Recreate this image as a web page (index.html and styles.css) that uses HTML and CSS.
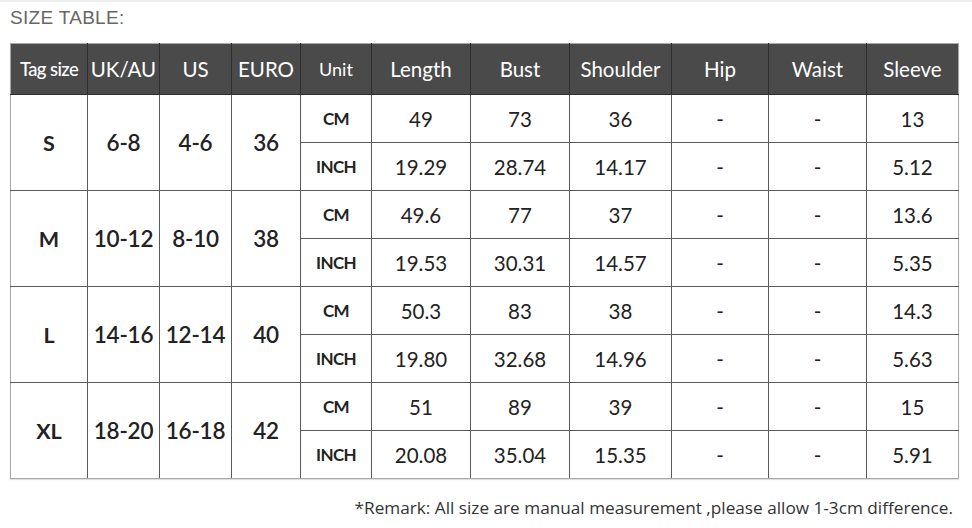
FILE: index.html
```html
<!DOCTYPE html>
<html>
<head>
<meta charset="utf-8">
<link rel="stylesheet" href="styles.css">
</head>
<body>
<div class="page">
  <div class="title">SIZE TABLE:</div>
  <table class="size-table">
    <colgroup>
      <col class="c-tag"><col class="c-uk"><col class="c-us"><col class="c-euro"><col class="c-unit">
      <col class="c-len"><col class="c-bust"><col class="c-sh"><col class="c-hip"><col class="c-waist"><col class="c-sleeve">
    </colgroup>
    <thead>
      <tr>
        <th class="tag">Tag size</th><th>UK/AU</th><th>US</th><th>EURO</th><th class="unit-h">Unit</th>
        <th>Length</th><th>Bust</th><th>Shoulder</th><th>Hip</th><th>Waist</th><th>Sleeve</th>
      </tr>
    </thead>
    <tbody>
      <tr class="r-cm">
        <td rowspan="2" class="size">S</td><td rowspan="2" class="num-b">6-8</td><td rowspan="2" class="num-b">4-6</td><td rowspan="2" class="num-b">36</td>
        <td class="unit">CM</td><td>49</td><td>73</td><td>36</td><td>-</td><td>-</td><td>13</td>
      </tr>
      <tr class="r-in">
        <td class="unit">INCH</td><td>19.29</td><td>28.74</td><td>14.17</td><td>-</td><td>-</td><td>5.12</td>
      </tr>
      <tr class="r-cm">
        <td rowspan="2" class="size">M</td><td rowspan="2" class="num-b">10-12</td><td rowspan="2" class="num-b">8-10</td><td rowspan="2" class="num-b">38</td>
        <td class="unit">CM</td><td>49.6</td><td>77</td><td>37</td><td>-</td><td>-</td><td>13.6</td>
      </tr>
      <tr class="r-in">
        <td class="unit">INCH</td><td>19.53</td><td>30.31</td><td>14.57</td><td>-</td><td>-</td><td>5.35</td>
      </tr>
      <tr class="r-cm">
        <td rowspan="2" class="size">L</td><td rowspan="2" class="num-b">14-16</td><td rowspan="2" class="num-b">12-14</td><td rowspan="2" class="num-b">40</td>
        <td class="unit">CM</td><td>50.3</td><td>83</td><td>38</td><td>-</td><td>-</td><td>14.3</td>
      </tr>
      <tr class="r-in">
        <td class="unit">INCH</td><td>19.80</td><td>32.68</td><td>14.96</td><td>-</td><td>-</td><td>5.63</td>
      </tr>
      <tr class="r-cm">
        <td rowspan="2" class="size">XL</td><td rowspan="2" class="num-b">18-20</td><td rowspan="2" class="num-b">16-18</td><td rowspan="2" class="num-b">42</td>
        <td class="unit">CM</td><td>51</td><td>89</td><td>39</td><td>-</td><td>-</td><td>15</td>
      </tr>
      <tr class="r-in">
        <td class="unit">INCH</td><td>20.08</td><td>35.04</td><td>15.35</td><td>-</td><td>-</td><td>5.91</td>
      </tr>
    </tbody>
  </table>
  <div class="remark">*Remark: All size are manual measurement ,please allow 1-3cm difference.</div>
</div>
</body>
</html>
```

FILE: styles.css
```css
html, body {
  margin: 0;
  padding: 0;
  background: #fff;
}
.page {
  width: 972px;
  height: 528px;
  overflow: hidden;
  border-top: 2px solid #f0f0f0;
  box-sizing: border-box;
}
.title {
  font-family: "Liberation Sans", Arial, sans-serif;
  font-size: 19px;
  color: #666;
  line-height: 22px;
  padding: 5px 0 0 10px;
  height: 36px;
  box-sizing: border-box;
  letter-spacing: 0.3px;
}
.size-table {
  margin: 5px 0 0 10px;
  border-collapse: collapse;
  table-layout: fixed;
  width: 948px;
  font-family: Lato, "Open Sans", sans-serif;
  color: #222;
  border: 1px solid #a8a8a8;
  box-shadow: 0 1px 1px rgba(0,0,0,0.12);
}
.c-tag { width: 77px; }
.c-uk { width: 72px; }
.c-us { width: 72px; }
.c-euro { width: 69px; }
.c-unit { width: 71px; }
.c-len { width: 99px; }
.c-bust { width: 99px; }
.c-sh { width: 102px; }
.c-hip { width: 97px; }
.c-waist { width: 98px; }
.c-sleeve { width: 92px; }

.size-table th {
  background: #4a4a4a;
  color: #fff;
  font-weight: 400;
  font-size: 20.5px;
  height: 50px;
  padding: 0;
  border: 1px solid #2e2e2e;
  border-top-color: #a8a8a8;
  text-align: center;
  vertical-align: middle;
}
.size-table th:first-child { border-left-color: #a8a8a8; }
.size-table th:last-child { border-right-color: #a8a8a8; }
.size-table th.tag {
  font-size: 18.5px;
  font-weight: 500;
  letter-spacing: -0.6px;
  white-space: nowrap;
}
.size-table th.unit-h { font-size: 18px; }
.size-table td {
  border: 1px solid #5a5a5a;
  padding: 0;
  text-align: center;
  vertical-align: middle;
  font-size: 20.5px;
  height: 47px;
}
.size-table td.size {
  font-weight: 700;
  font-size: 21.5px;
}
.size-table td.num-b {
  font-weight: 600;
  font-size: 22.5px;
  letter-spacing: -0.2px;
  white-space: nowrap;
}
.size-table td.unit {
  font-weight: 700;
  font-size: 17px;
  letter-spacing: -0.6px;
}
.size-table tbody tr:last-child td { border-bottom-color: #a8a8a8; }
.size-table td.size { border-left-color: #a8a8a8; }
.size-table td:last-child { border-right-color: #a8a8a8; }
.size-table tbody tr:nth-last-child(2) td[rowspan] { border-bottom-color: #a8a8a8; }

.remark {
  font-family: "Open Sans", "Liberation Sans", sans-serif;
  font-size: 17.2px;
  color: #333;
  text-align: right;
  padding-right: 19px;
  margin-top: 17px;
}
```
